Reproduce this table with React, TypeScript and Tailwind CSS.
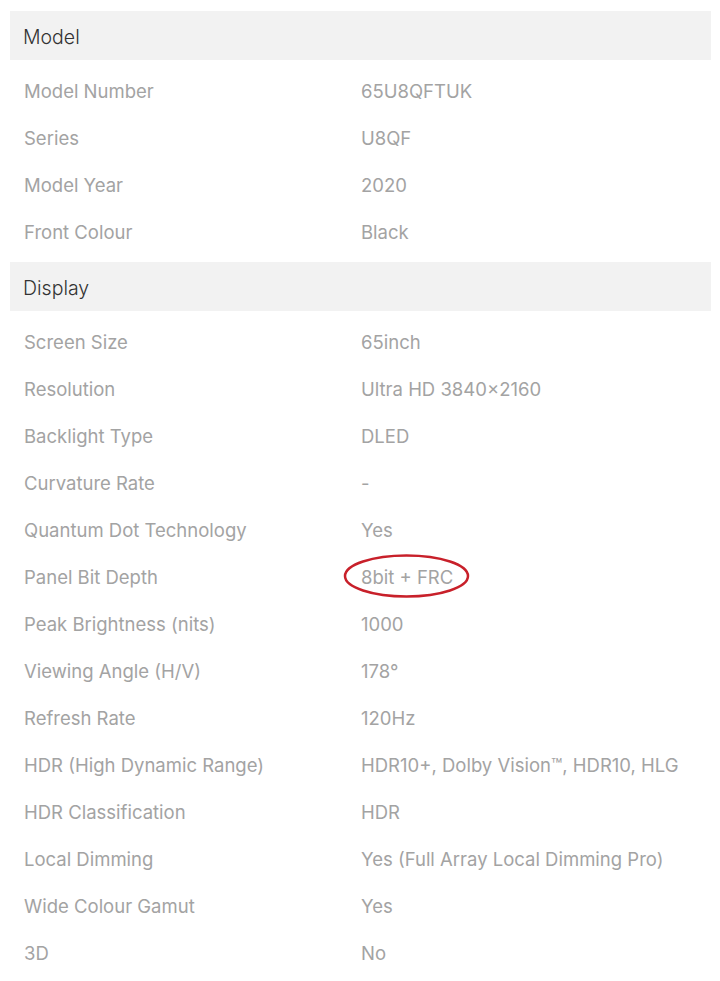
import React from "react";

const sections: { title: string; rows: [string, string][] }[] = [
  {
    title: "Model",
    rows: [
      ["Model Number", "65U8QFTUK"],
      ["Series", "U8QF"],
      ["Model Year", "2020"],
      ["Front Colour", "Black"],
    ],
  },
  {
    title: "Display",
    rows: [
      ["Screen Size", "65inch"],
      ["Resolution", "Ultra HD 3840×2160"],
      ["Backlight Type", "DLED"],
      ["Curvature Rate", "-"],
      ["Quantum Dot Technology", "Yes"],
      ["Panel Bit Depth", "8bit + FRC"],
      ["Peak Brightness (nits)", "1000"],
      ["Viewing Angle (H/V)", "178°"],
      ["Refresh Rate", "120Hz"],
      ["HDR (High Dynamic Range)", "HDR10+, Dolby Vision™, HDR10, HLG"],
      ["HDR Classification", "HDR"],
      ["Local Dimming", "Yes (Full Array Local Dimming Pro)"],
      ["Wide Colour Gamut", "Yes"],
      ["3D", "No"],
    ],
  },
];

export default function App() {
  return (
    <div
      className="w-[720px] h-[981px] bg-white pt-[11px] pl-[10px] pr-[9px]"
      style={{ fontFamily: "Inter, 'Liberation Sans', sans-serif" }}
    >
      {sections.map((s, si) => (
        <div key={s.title} className={si > 0 ? "mt-[6px]" : ""}>
          <div className="h-[49px] bg-[#f2f2f2] flex items-center pl-[13px] pt-[4px] text-[19.5px] text-[#333333] font-light">
            {s.title}
          </div>
          <div className="pt-[8px]">
            {s.rows.map(([k, v]) => (
              <div key={k} className="h-[47px] flex items-center text-[18.5px] text-[#a3a3a3]">
                <div className="w-[351px] shrink-0 pl-[14px]">{k}</div>
                <div className="relative">
                  {v}
                  {k === "Panel Bit Depth" && (
                    <svg
                      className="absolute left-[-18px] top-[-11px]"
                      width="128"
                      height="46"
                      viewBox="0 0 128 46"
                    >
                      <ellipse cx="63.5" cy="23" rx="61.5" ry="20.5" fill="none" stroke="#c8202a" strokeWidth="2.5" />
                    </svg>
                  )}
                </div>
              </div>
            ))}
          </div>
        </div>
      ))}
    </div>
  );
}
